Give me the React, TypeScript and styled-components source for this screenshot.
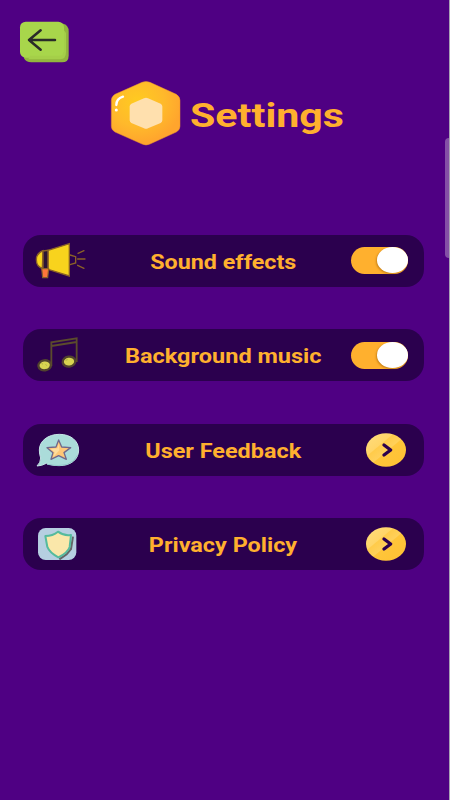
import React from 'react';
import styled, { createGlobalStyle } from 'styled-components';

const Global = createGlobalStyle`
  * { box-sizing: border-box; }
  body { margin: 0; background: #4e0082; }
`;

const Screen = styled.main`
  position: relative;
  width: 450px;
  height: 800px;
  padding: 21px 25px 0 19px;
  overflow: hidden;
  background: #4f0083;
  border-right: 1px solid #a9a0b4;
  font-family: Roboto, "Liberation Sans", sans-serif;
`;

const BackButton = styled.button`
  display: block;
  width: 50px;
  height: 42px;
  padding: 0;
  border: 0;
  background: none;
  svg { display: block; }
`;

const Header = styled.header`
  display: flex;
  align-items: center;
  gap: 8px;
  height: 66px;
  margin: 17px 0 0 91px;
  svg { flex: none; }
`;

const Title = styled.h1<{ $stretch: number }>`
  margin: 0;
  padding-top: 3px;
  color: #ffb02e;
  font-size: 34px;
  line-height: 40px;
  font-weight: 700;
  white-space: nowrap;
  transform: scaleX(${(p) => p.$stretch});
  transform-origin: left center;
`;

const List = styled.div`
  display: flex;
  flex-direction: column;
  gap: 42.2px;
  margin: 88.7px 0 0 4px;
`;

const Row = styled.div`
  display: grid;
  grid-template-columns: 75px 1fr 75px;
  align-items: center;
  width: 401px;
  height: 52.3px;
  border-radius: 18px;
  background: #2b004e;
`;

const RowIcon = styled.svg`
  display: block;
  width: 75px;
  height: 52.3px;
`;

const Label = styled.span<{ $stretch: number }>`
  justify-self: center;
  padding-top: 2px;
  color: #ffb02e;
  font-size: 20px;
  line-height: 24px;
  font-weight: 700;
  white-space: nowrap;
  transform: translateX(-0.4px) scaleX(${(p) => p.$stretch});
`;

const Toggle = styled.div`
  display: flex;
  justify-content: flex-end;
  width: 57px;
  height: 27px;
  margin-left: 2px;
  border-radius: 14px;
  background: #ffb02e;
`;

const Knob = styled.div`
  width: 31.5px;
  height: 26px;
  border-radius: 50%;
  background: #fff;
  box-shadow: -1px 1px 2px rgba(140, 80, 0, 0.45);
`;

const Round = styled.button`
  width: 41px;
  height: 34px;
  margin-left: 17px;
  padding: 0;
  border: 0;
  background: none;
  svg { display: block; }
`;

const ScrollThumb = styled.div`
  position: absolute;
  top: 138px;
  right: 0;
  width: 4.5px;
  height: 120px;
  border-radius: 4px 0 0 4px;
  background: #8450a6;
`;

const BackIcon = () => (
  <svg width="50" height="42" viewBox="27 32 150 126">
    <path d="M45 40H160Q176 45 176 62V136Q176 156 156 156H64Q48 156 42 144Z" fill="#93b53e" />
    <rect x="30" y="34" width="132" height="108" rx="17" fill="#a8d64b" />
    <path d="M60 136H148Q162 136 162 118V60L168 68V126Q168 147 150 147H55Z" fill="#a5cf49" />
    <path d="M135 89H57M92 60L57 89L92 118" fill="none" stroke="#292b29" strokeWidth="7.5" strokeLinecap="round" strokeLinejoin="round" />
  </svg>
);

const Hexagon = () => (
  <svg width="72" height="66" viewBox="30 30 216 198">
    <defs>
      <radialGradient id="hex" cx="0.38" cy="0.32" r="0.65">
        <stop offset="0" stopColor="#ffcb20" />
        <stop offset="0.6" stopColor="#ffb92b" />
        <stop offset="1" stopColor="#ffa52d" />
      </radialGradient>
    </defs>
    <path d="M126 37Q138 32 150 37L229 73Q240 80 240 91V169Q240 180 229 186L150 222Q138 228 126 222L45 186Q34 180 34 169V91Q34 80 45 73Z" fill="url(#hex)" stroke="#e8912f" strokeWidth="1.5" />
    <path d="M132 85Q138 82 144 85L182 101Q187 104 187 109V151Q187 156 182 159L144 175Q138 178 132 175L94 159Q89 156 89 151V109Q89 104 94 101Z" fill="#ffe0ae" />
    <path d="M69 80Q49 86 49 105" fill="none" stroke="#fff" strokeWidth="7" strokeLinecap="round" />
    <circle cx="49" cy="120" r="4.5" fill="#fff" />
  </svg>
);

const Megaphone = () => (
  <RowIcon viewBox="24 30 225 157">
    <path d="M84 77Q64 85 64 104Q64 124 82 130Z" fill="#f8d31d" stroke="#8b6127" strokeWidth="4" />
    <path d="M99 76L163 56V153L99 133Z" fill="#f8d31d" stroke="#8b6127" strokeWidth="4" />
    <path d="M84 78L99 76V133L84 130Z" fill="#2b1335" stroke="#8b6127" strokeWidth="4" />
    <path d="M80 131H101L98 158H83Z" fill="#ff763b" stroke="#8b6127" strokeWidth="3.5" />
    <path d="M165 90L182 95V114L165 119M189 85L207 77M188 102H210M188 121L207 130" fill="none" stroke="#8b6127" strokeWidth="4" strokeLinecap="round" />
  </RowIcon>
);

const Notes = () => (
  <RowIcon viewBox="24 28 225 157">
    <ellipse cx="89" cy="137" rx="19" ry="15" transform="rotate(-8 89 137)" fill="#d8d451" stroke="#51432e" strokeWidth="7" />
    <ellipse cx="162" cy="126" rx="19" ry="15" transform="rotate(-8 162 126)" fill="#d8d451" stroke="#51432e" strokeWidth="7" />
    <path d="M109 139V68L185 56V127M109 79L185 67" fill="none" stroke="#5b4b2c" strokeWidth="5.5" />
    <path d="M79 130L84 134M92 134L95 138M152 122L158 120" stroke="#aaa642" strokeWidth="2.5" />
  </RowIcon>
);

const Feedback = () => (
  <RowIcon viewBox="24 26 225 157">
    <path d="M133 57C168 57 191 77 191 104C191 132 168 151 133 151C117 151 103 148 94 144Q80 152 66 152Q77 142 77 128Q73 118 73 104C73 77 99 57 133 57Z" fill="#abdcda" stroke="#c5e4e5" strokeWidth="3" />
    <path d="M96 147Q169 162 188 119" fill="none" stroke="#92c8ca" strokeWidth="3" />
    <path d="M131 74L140 95L167 97L147 112L154 132L131 121L108 132L114 112L96 97L123 95Z" fill="#ffc777" stroke="#71688b" strokeWidth="4" strokeLinejoin="round" />
    <path d="M131 84L128 99L107 101L119 111L115 125L133 105Z" fill="#ffdd9e" />
  </RowIcon>
);

const Shield = () => (
  <RowIcon viewBox="24 25 225 157">
    <rect x="69" y="55" width="115" height="96" rx="23" fill="#b6cfe1" />
    <path d="M174 81L168 118L155 134L133 149" fill="none" stroke="#646767" strokeWidth="6" />
    <path d="M129 66Q148 80 168 76L164 112Q158 130 130 143Q104 130 97 112L91 79Q113 79 129 66Z" fill="#fae7aa" stroke="#55bb9d" strokeWidth="6" strokeLinejoin="round" />
  </RowIcon>
);

const Arrow = ({ id }: { id: string }) => (
  <svg width="41" height="34" viewBox="0 0 123 102">
    <defs>
      <linearGradient id={id} x1="0" y1="0" x2="1" y2="1">
        <stop offset="0" stopColor="#ffdc7f" />
        <stop offset="0.34" stopColor="#ffd568" />
        <stop offset="0.36" stopColor="#ffcb4a" />
        <stop offset="0.52" stopColor="#ffd05a" />
        <stop offset="0.54" stopColor="#ffc53a" />
        <stop offset="1" stopColor="#ffc132" />
      </linearGradient>
    </defs>
    <ellipse cx="60" cy="51" rx="60" ry="50" fill={`url(#${id})`} />
    <path d="M54 36L74 51L54 66" fill="none" stroke="#2b004e" strokeWidth="10" strokeLinecap="round" strokeLinejoin="round" />
  </svg>
);

export default function App() {
  return (
    <>
      <Global />
      <Screen>
        <BackButton aria-label="Back"><BackIcon /></BackButton>
        <Header>
          <Hexagon />
          <Title $stretch={1.21}>Settings</Title>
        </Header>
        <List>
          <Row>
            <Megaphone />
            <Label $stretch={1.165}>Sound effects</Label>
            <Toggle role="switch" aria-checked="true"><Knob /></Toggle>
          </Row>
          <Row>
            <Notes />
            <Label $stretch={1.175}>Background music</Label>
            <Toggle role="switch" aria-checked="true"><Knob /></Toggle>
          </Row>
          <Row>
            <Feedback />
            <Label $stretch={1.17}>User Feedback</Label>
            <Round aria-label="Open user feedback"><Arrow id="feedback-fill" /></Round>
          </Row>
          <Row>
            <Shield />
            <Label $stretch={1.17}>Privacy Policy</Label>
            <Round aria-label="Open privacy policy"><Arrow id="privacy-fill" /></Round>
          </Row>
        </List>
        <ScrollThumb />
      </Screen>
    </>
  );
}
